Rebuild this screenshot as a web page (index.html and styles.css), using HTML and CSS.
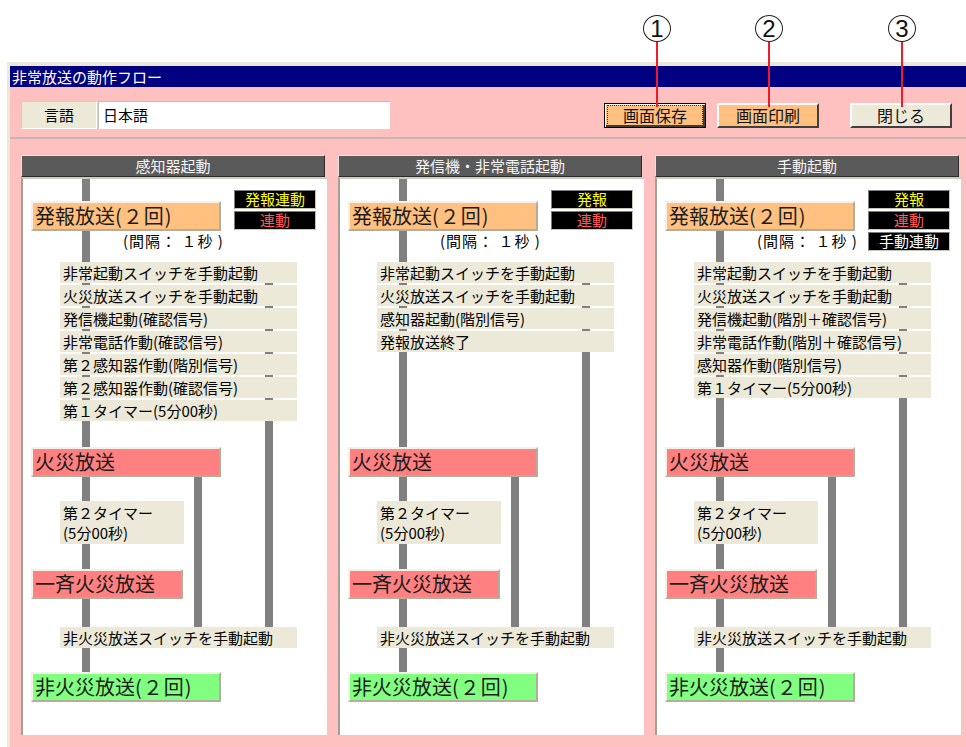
FILE: index.html
```html
<!DOCTYPE html>
<html lang="ja">

<head>
	<meta charset="UTF-8">
	<title>非常放送の動作フロー</title>
	<link rel="stylesheet" href="styles.css">
</head>

<body>
	<div class="callout callout-1">1</div>
	<div class="callout callout-2">2</div>
	<div class="callout callout-3">3</div>

	<div class="window">
		<div class="titlebar">非常放送の動作フロー</div>

		<div class="toolbar">
			<div class="lang-label">言語</div>
			<div class="lang-input">日本語</div>
			<div class="actions">
				<button class="btn btn-orange btn-default"><span>画面保存</span></button>
				<button class="btn btn-orange"><span>画面印刷</span></button>
				<button class="btn btn-close"><span>閉じる</span></button>
			</div>
		</div>

		<div class="panels">
			<!-- 感知器起動 -->
			<section class="panel">
				<div class="panel-head">感知器起動</div>
				<div class="panel-body">
					<span class="wire wire-main"></span>
					<span class="wire wire-side"></span>
					<span class="wire wire-mid"></span>

					<div class="top-row">
						<div class="start">
							<div class="stage alarm">発報放送<span class="count">(２回)</span></div>
							<div class="interval">(間隔： １秒 )</div>
						</div>
						<ul class="badges">
							<li class="badge yellow">発報連動</li>
							<li class="badge red">連動</li>
						</ul>
					</div>

					<ul class="steps">
						<li class="step">非常起動スイッチを手動起動</li>
						<li class="step">火災放送スイッチを手動起動</li>
						<li class="step">発信機起動(確認信号)</li>
						<li class="step">非常電話作動(確認信号)</li>
						<li class="step">第２感知器作動(階別信号)</li>
						<li class="step">第２感知器作動(確認信号)</li>
						<li class="step">第１タイマー(5分00秒)</li>
					</ul>

					<div class="stage fire">火災放送</div>
					<div class="timer">第２タイマー<br>(5分00秒)</div>
					<div class="stage fire fire-all">一斉火災放送</div>
					<div class="step switch-off">非火災放送スイッチを手動起動</div>
					<div class="stage nonfire">非火災放送<span class="count">(２回)</span></div>
				</div>
			</section>

			<!-- 発信機・非常電話起動 -->
			<section class="panel">
				<div class="panel-head">発信機・非常電話起動</div>
				<div class="panel-body">
					<span class="wire wire-main"></span>
					<span class="wire wire-side"></span>
					<span class="wire wire-mid"></span>

					<div class="top-row">
						<div class="start">
							<div class="stage alarm">発報放送<span class="count">(２回)</span></div>
							<div class="interval">(間隔： １秒 )</div>
						</div>
						<ul class="badges">
							<li class="badge yellow">発報</li>
							<li class="badge red">連動</li>
						</ul>
					</div>

					<ul class="steps">
						<li class="step">非常起動スイッチを手動起動</li>
						<li class="step">火災放送スイッチを手動起動</li>
						<li class="step">感知器起動(階別信号)</li>
						<li class="step">発報放送終了</li>
					</ul>

					<div class="stage fire">火災放送</div>
					<div class="timer">第２タイマー<br>(5分00秒)</div>
					<div class="stage fire fire-all">一斉火災放送</div>
					<div class="step switch-off">非火災放送スイッチを手動起動</div>
					<div class="stage nonfire">非火災放送<span class="count">(２回)</span></div>
				</div>
			</section>

			<!-- 手動起動 -->
			<section class="panel">
				<div class="panel-head">手動起動</div>
				<div class="panel-body">
					<span class="wire wire-main"></span>
					<span class="wire wire-side"></span>
					<span class="wire wire-mid"></span>

					<div class="top-row">
						<div class="start">
							<div class="stage alarm">発報放送<span class="count">(２回)</span></div>
							<div class="interval">(間隔： １秒 )</div>
						</div>
						<ul class="badges">
							<li class="badge yellow">発報</li>
							<li class="badge red">連動</li>
							<li class="badge white">手動連動</li>
						</ul>
					</div>

					<ul class="steps">
						<li class="step">非常起動スイッチを手動起動</li>
						<li class="step">火災放送スイッチを手動起動</li>
						<li class="step">発信機起動(階別＋確認信号)</li>
						<li class="step">非常電話作動(階別＋確認信号)</li>
						<li class="step">感知器作動(階別信号)</li>
						<li class="step">第１タイマー(5分00秒)</li>
					</ul>

					<div class="stage fire">火災放送</div>
					<div class="timer">第２タイマー<br>(5分00秒)</div>
					<div class="stage fire fire-all">一斉火災放送</div>
					<div class="step switch-off">非火災放送スイッチを手動起動</div>
					<div class="stage nonfire">非火災放送<span class="count">(２回)</span></div>
				</div>
			</section>
		</div>
	</div>
</body>

</html>
```

FILE: styles.css
```css
* {
	margin: 0;
	padding: 0;
	box-sizing: border-box;
}

body {
	position: relative;
	height: 747px;
	overflow: hidden;
	background: #fff;
	color: #000;
	font-family: "Noto Sans CJK JP", "Noto Sans", sans-serif;
}

/* numbered callouts above the buttons */
.callout {
	position: absolute;
	top: 15px;
	z-index: 5;
	width: 28px;
	height: 27px;
	border: 1px solid #222;
	border-radius: 50%;
	background: #fff;
	font-family: "Liberation Sans", Arial, sans-serif;
	font-size: 24px;
	line-height: 25px;
	text-align: center;
	color: #111;
}

.callout::after {
	content: "";
	position: absolute;
	left: 12px;
	top: 26px;
	width: 2px;
	height: 65px;
	background: #ee1c2a;
}

.callout-1 {
	left: 643px;
}

.callout-2 {
	left: 755px;
}

.callout-3 {
	left: 888px;
}

/* window */
.window {
	margin: 62px 0 0 7px;
	height: 685px;
	border-top: 4px solid #ece9d8;
	border-left: 3px solid #ece9d8;
	background: #ffc0c0;
}

.titlebar {
	height: 21px;
	padding-left: 2px;
	background: #000080;
	color: #fff;
	font-size: 15px;
	line-height: 21px;
}

.toolbar {
	display: flex;
	align-items: flex-start;
	height: 52px;
	padding: 14px 0 0 11px;
	border-bottom: 2px solid #c9b3b3;
}

.lang-label {
	width: 76px;
	height: 28px;
	background: #ece9d8;
	border-top: 1px solid #d2cec2;
	border-left: 1px solid #d2cec2;
	border-right: 1px solid #fff;
	border-bottom: 1px solid #fff;
	font-size: 15px;
	line-height: 26px;
	text-align: center;
}

.lang-input {
	width: 292px;
	height: 28px;
	margin-left: 1px;
	padding-left: 4px;
	background: #fff;
	border-top: 1px solid #c4c0b4;
	border-left: 1px solid #c4c0b4;
	font-size: 15px;
	line-height: 26px;
}

.actions {
	display: flex;
	gap: 11px;
	margin: 2px 0 0 214px;
}

.btn {
	width: 102px;
	height: 25px;
	font-family: inherit;
	font-size: 16px;
	line-height: 19px;
	color: #111;
	border: 2px solid;
	border-color: #fff #404040 #404040 #fff;
	cursor: pointer;
}

.btn-orange {
	background: #ffc080;
}

.btn-close {
	margin-left: 20px;
	background: #ece9d8;
}

.btn-default {
	border: 1px solid #000;
	box-shadow: inset 1px 1px 0 #fff, inset -2px -2px 0 #404040;
}

.btn-default span {
	display: block;
	margin: 2px 3px;
	outline: 1px dotted #333;
}

/* flow panels */
.panels {
	display: flex;
	gap: 11px;
	padding: 16px 0 0 11px;
}

.panel {
	width: 306px;
}

.panel-head {
	height: 22px;
	margin-right: 2px;
	background: #5a5a5a;
	color: #f6f6f6;
	border-top: 1px solid #e6e6e6;
	border-left: 1px solid #e6e6e6;
	border-right: 1px solid #2c2c2c;
	border-bottom: 1px solid #2c2c2c;
	font-size: 15px;
	line-height: 20px;
	text-align: center;
}

.panel-body {
	position: relative;
	z-index: 0;
	height: 558px;
	background: #fff;
	border-top: 2px solid #cdc9bd;
	border-left: 2px solid #a4a096;
}

.wire {
	position: absolute;
	z-index: -1;
	width: 8px;
	background: #808080;
}

.wire-main {
	left: 59px;
	top: 0;
	height: 493px;
}

.wire-side {
	left: 242px;
	top: 104px;
	height: 344px;
}

.wire-mid {
	left: 171px;
	top: 297px;
	height: 151px;
}

.top-row {
	display: flex;
	gap: 13px;
	height: 83px;
	padding-left: 8px;
}

.start {
	width: 190px;
	padding-top: 22px;
}

.stage {
	width: 190px;
	height: 30px;
	padding-left: 2px;
	border: 2px solid;
	border-color: #f4f1e8 #b4ad9c #b4ad9c #f4f1e8;
	color: #1c1c1c;
	font-size: 20px;
	line-height: 25px;
	white-space: nowrap;
}

.count {
	letter-spacing: 1px;
}

.panel-body > .stage {
	margin-left: 8px;
}

.alarm {
	background: #ffc080;
}

.fire {
	background: #ff8080;
}

.fire-all {
	width: 152px;
	margin-top: 25px;
}

.nonfire {
	margin-top: 24px;
	background: #80ff80;
}

.interval {
	padding: 1px 0 0 92px;
	font-size: 15px;
	line-height: 18px;
	letter-spacing: 1px;
	white-space: nowrap;
}

.badges {
	display: flex;
	flex-direction: column;
	gap: 2px;
	padding-top: 11px;
	list-style: none;
}

.badge {
	width: 82px;
	height: 19px;
	background: #000;
	border: 1px solid;
	border-color: #7c7c7c #c8c4b8 #c8c4b8 #7c7c7c;
	font-size: 15px;
	line-height: 16px;
	text-align: center;
}

.yellow {
	color: #ffff00;
}

.red {
	color: #ff5a5a;
}

.white {
	color: #fff;
}

.steps {
	height: 185px;
	padding-left: 37px;
	list-style: none;
}

.step {
	width: 237px;
	height: 21px;
	margin-bottom: 2px;
	padding-left: 3px;
	background: #ece9d8;
	font-size: 15px;
	line-height: 21px;
	white-space: nowrap;
}

.timer {
	width: 124px;
	height: 43px;
	margin: 24px 0 0 37px;
	padding: 2px 0 0 3px;
	background: #ece9d8;
	font-size: 15px;
	line-height: 20px;
}

.switch-off {
	margin: 28px 0 0 37px;
}
```
